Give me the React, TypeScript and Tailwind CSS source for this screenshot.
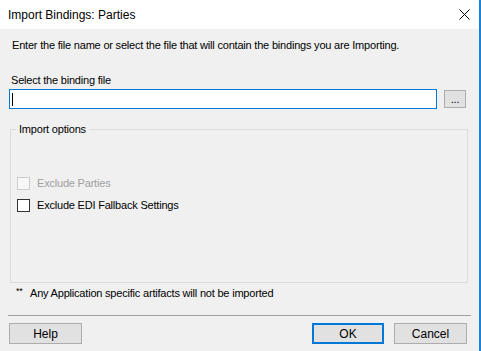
import React from 'react'

const font = { fontFamily: '"Liberation Sans", Arial, sans-serif' }

function Checkbox({ label, disabled }: { label: string; disabled?: boolean }) {
  return (
    <div className="flex h-4 items-center">
      <span
        className={
          disabled
            ? 'ml-[1px] h-[13px] w-[13px] border border-[#cccccc] bg-[#f7f7f7]'
            : 'ml-[1px] h-[13px] w-[13px] border border-[#333333] bg-white'
        }
      />
      <span className={disabled ? 'ml-[7px] text-[#a0a0a0]' : 'ml-[7px] text-black'}>{label}</span>
    </div>
  )
}

export default function App() {
  return (
    <div
      className="flex h-[351px] w-[481px] flex-col border-r-2 border-[#1883d7] bg-[#f0f0f0] text-[11px] leading-4 tracking-[-0.2px] text-black"
      style={font}
    >
      {/* Title bar */}
      <div className="flex h-[29px] shrink-0 items-center justify-between bg-white pl-[8px] pr-[9px] text-[12px] tracking-normal">
        <span>Import Bindings: Parties</span>
        <svg width="11" height="11" viewBox="0 0 11 11" className="mb-[1px]">
          <path d="M0.5 0.5 L10.5 10.5 M10.5 0.5 L0.5 10.5" stroke="#000" strokeWidth="1" />
        </svg>
      </div>

      <div className="mt-[8px] pl-[12px]">
        Enter the file name or select the file that will contain the bindings you are Importing.
      </div>

      <div className="mt-[19px] pl-[11px]">Select the binding file</div>

      <div className="mt-[1px] flex items-center pl-[9px]">
        <div className="flex h-[20px] w-[428px] items-center border border-[#0078d7] bg-white pl-[2px]">
          <span className="h-[13px] w-[1px] bg-black" />
        </div>
        <button className="ml-[7px] flex h-[18px] w-[22px] items-end justify-center border border-[#adadad] bg-[#e1e1e1] pb-[2px] text-[11px] leading-none">
          ...
        </button>
      </div>

      <fieldset className="mx-[10px] mt-[12px] h-[162px] w-[458px] border border-[#dcdcdc] px-[5px]">
        <legend className="px-[3px]">Import options</legend>
        <div className="mt-[38px] flex flex-col gap-[6px]">
          <Checkbox label="Exclude Parties" disabled />
          <Checkbox label="Exclude EDI Fallback Settings" />
        </div>
      </fieldset>

      <div className="mt-[2px] flex pl-[16px]">
        <span className="w-[14px] text-[9px] leading-3">**</span>
        <span>Any Application specific artifacts will not be imported</span>
      </div>

      <div className="mx-[8px] mt-[14px] h-px bg-[#a0a0a0]" />

      <div className="mt-[7px] flex items-center pl-[9px] pr-[12px] text-[12px] tracking-normal">
        <button className="h-[21px] w-[73px] border border-[#adadad] bg-[#e1e1e1]">Help</button>
        <button className="ml-auto h-[21px] w-[72px] border-2 border-[#0078d7] bg-[#e1e1e1]">OK</button>
        <button className="ml-[10px] h-[21px] w-[73px] border border-[#adadad] bg-[#e1e1e1]">Cancel</button>
      </div>
    </div>
  )
}
